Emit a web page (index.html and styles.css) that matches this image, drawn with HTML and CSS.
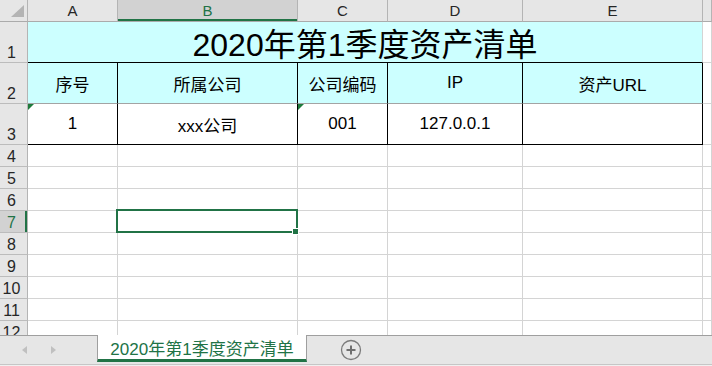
FILE: index.html
```html
<!DOCTYPE html>
<html>

<head>
    <meta charset="utf-8">
    <title>2020年第1季度资产清单</title>

    <link rel="stylesheet" href="styles.css">
</head>

<body>
    <div class="sheet">
        <div class="corner"><span class="corner-mark"></span></div>
        <div class="col-head">A</div>
        <div class="col-head active">B</div>
        <div class="col-head">C</div>
        <div class="col-head">D</div>
        <div class="col-head">E</div>
        <div class="col-head"></div>

        <div class="row-head">1</div>
        <div class="cell title">2020年第1季度资产清单</div>
        <div class="cell"></div>

        <div class="row-head">2</div>
        <div class="cell head">序号</div>
        <div class="cell head">所属公司</div>
        <div class="cell head">公司编码</div>
        <div class="cell head">IP</div>
        <div class="cell head">资产URL</div>
        <div class="cell"></div>

        <div class="row-head">3</div>
        <div class="cell data flag">1</div>
        <div class="cell data">xxx公司</div>
        <div class="cell data flag">001</div>
        <div class="cell data">127.0.0.1</div>
        <div class="cell data"></div>
        <div class="cell"></div>

        <div class="row-head">4</div>
        <div class="cell"></div><div class="cell"></div><div class="cell"></div>
        <div class="cell"></div><div class="cell"></div><div class="cell"></div>

        <div class="row-head">5</div>
        <div class="cell"></div><div class="cell"></div><div class="cell"></div>
        <div class="cell"></div><div class="cell"></div><div class="cell"></div>

        <div class="row-head">6</div>
        <div class="cell"></div><div class="cell"></div><div class="cell"></div>
        <div class="cell"></div><div class="cell"></div><div class="cell"></div>

        <div class="row-head active">7</div>
        <div class="cell"></div>
        <div class="cell selected"><span class="selection"><span class="handle"></span></span></div>
        <div class="cell"></div>
        <div class="cell"></div><div class="cell"></div><div class="cell"></div>

        <div class="row-head">8</div>
        <div class="cell"></div><div class="cell"></div><div class="cell"></div>
        <div class="cell"></div><div class="cell"></div><div class="cell"></div>

        <div class="row-head">9</div>
        <div class="cell"></div><div class="cell"></div><div class="cell"></div>
        <div class="cell"></div><div class="cell"></div><div class="cell"></div>

        <div class="row-head">10</div>
        <div class="cell"></div><div class="cell"></div><div class="cell"></div>
        <div class="cell"></div><div class="cell"></div><div class="cell"></div>

        <div class="row-head">11</div>
        <div class="cell"></div><div class="cell"></div><div class="cell"></div>
        <div class="cell"></div><div class="cell"></div><div class="cell"></div>

        <div class="row-head">12</div>
        <div class="cell"></div><div class="cell"></div><div class="cell"></div>
        <div class="cell"></div><div class="cell"></div><div class="cell"></div>
    </div>

    <div class="tabbar">
        <div class="tab-nav">
            <span class="arrow prev"></span>
            <span class="arrow next"></span>
        </div>
        <div class="tab">2020年第1季度资产清单</div>
        <div class="add-sheet">
            <svg width="22" height="22" viewBox="0 0 22 22">
                <circle cx="11" cy="11" r="9.5" fill="none" stroke="#7b7b7b" stroke-width="1.3" />
                <path d="M11 6.5 V15.5 M6.5 11 H15.5" stroke="#6f6f6f" stroke-width="2" />
            </svg>
        </div>
    </div>
</body>

</html>
```

FILE: styles.css
```css
body {
    margin: 0;
    background-color: #f0f0f0;
    font-family: "Liberation Sans", "Noto Sans CJK SC", sans-serif;
    color: #000;
}

.sheet {
    display: grid;
    grid-template-columns: 28px 90px 180px 90px 135px 180px 1fr;
    grid-template-rows: 22px 41px 41px 41px repeat(9, 22px);
    height: 335px;
    overflow: hidden;
    background-color: #fff;
}

.corner,
.col-head,
.row-head {
    box-sizing: border-box;
    background-color: #e6e6e6;
    border-right: 1px solid #b4b4b4;
    border-bottom: 1px solid #ababab;
    color: #262626;
}

.corner {
    position: relative;
}

.corner-mark {
    position: absolute;
    right: 3px;
    bottom: 4px;
    width: 0;
    height: 0;
    border-left: 13px solid transparent;
    border-bottom: 12px solid #b4b4b4;
}

.col-head {
    display: flex;
    align-items: center;
    justify-content: center;
    font-size: 15px;
}

.col-head.active {
    background-color: #d2d2d2;
    color: #217346;
    box-shadow: inset 0 -2px 0 #217346;
}

.row-head {
    display: flex;
    align-items: flex-end;
    justify-content: center;
    padding: 0 4px 1px 0;
    font-size: 16px;
    line-height: 16px;
    border-bottom-color: #bcbcbc;
}

.row-head.active {
    background-color: #d2d2d2;
    color: #217346;
    box-shadow: inset -2px 0 0 #217346;
}

.cell {
    box-sizing: border-box;
    border-right: 1px solid #d4d4d4;
    border-bottom: 1px solid #d4d4d4;
    display: flex;
    align-items: center;
    justify-content: center;
    font-size: 17px;
}

.title {
    grid-column: span 5;
    background-color: #ccffff;
    border-bottom-color: #000;
    font-size: 32px;
}

.head {
    background-color: #ccffff;
    border-right-color: #000;
    border-bottom-color: #a3a3a3;
}

.data {
    border-right-color: #000;
    border-bottom-color: #000;
}

.flag {
    position: relative;
}

.flag::before {
    content: "";
    position: absolute;
    top: 0;
    left: 0;
    border-top: 6px solid #1e7b3c;
    border-right: 6px solid transparent;
}

.selected {
    position: relative;
}

.selection {
    position: absolute;
    left: -2px;
    top: -2px;
    width: 182px;
    height: 24px;
    box-sizing: border-box;
    border: 2px solid #217346;
}

.handle {
    position: absolute;
    right: -3px;
    bottom: -4px;
    width: 5px;
    height: 5px;
    background-color: #217346;
    border: 1px solid #fff;
}

.tabbar {
    display: flex;
    height: 28px;
    background-color: #e6e6e6;
    border-top: 1px solid #9f9f9f;
    border-bottom: 1px solid #c6c6c6;
}

.tab-nav {
    width: 97px;
    display: flex;
    align-items: center;
    padding-left: 22px;
    gap: 24px;
    box-sizing: border-box;
}

.arrow {
    width: 0;
    height: 0;
    border-top: 4px solid transparent;
    border-bottom: 4px solid transparent;
}

.arrow.prev {
    border-right: 5px solid #c0c0c0;
}

.arrow.next {
    border-left: 5px solid #c0c0c0;
}

.tab {
    margin-top: -1px;
    width: 210px;
    height: 27px;
    box-sizing: border-box;
    background-color: #fff;
    border-left: 1px solid #9f9f9f;
    border-right: 1px solid #9f9f9f;
    border-bottom: 3px solid #217346;
    color: #217346;
    font-size: 17px;
    display: flex;
    align-items: center;
    justify-content: center;
    padding-top: 1px;
}

.add-sheet {
    margin-left: 33px;
    display: flex;
    align-items: center;
}
```
